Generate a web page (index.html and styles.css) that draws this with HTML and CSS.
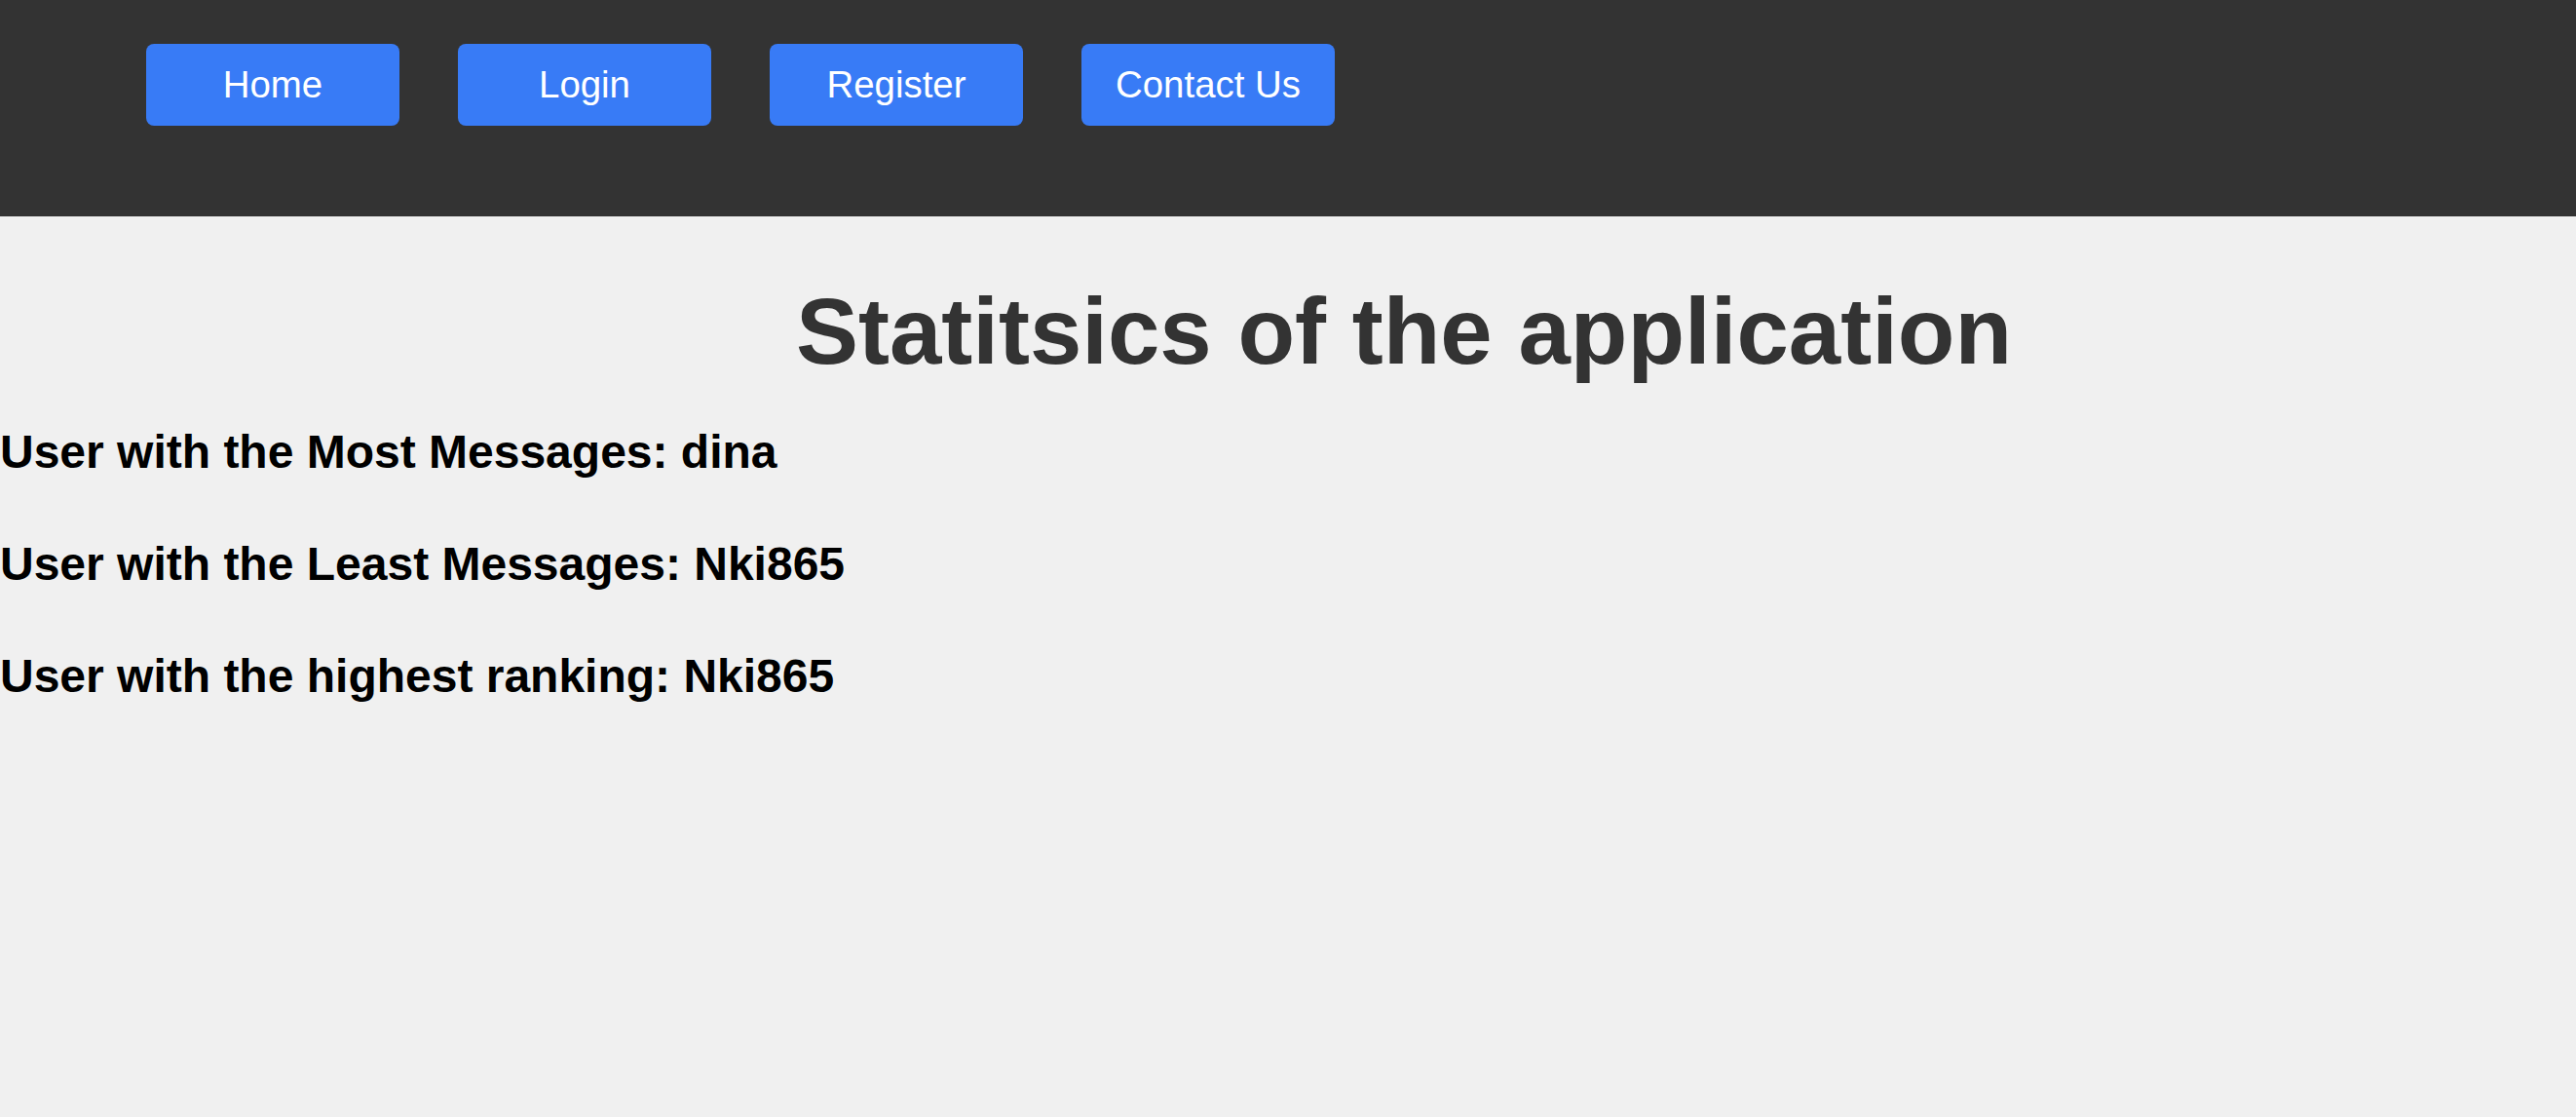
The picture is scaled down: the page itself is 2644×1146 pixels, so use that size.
FILE: index.html
```html
<!DOCTYPE html>
<html lang="en">
<head>
<meta charset="utf-8">
<title>Statistics</title>
<link rel="stylesheet" href="styles.css">
</head>
<body>
<header class="topbar">
  <nav class="nav">
    <a class="nav-btn" href="#">Home</a>
    <a class="nav-btn" href="#">Login</a>
    <a class="nav-btn" href="#">Register</a>
    <a class="nav-btn" href="#">Contact Us</a>
  </nav>
</header>
<main class="content">
  <h1 class="title">Statitsics of the application</h1>
  <div class="stats">
    <h2 class="stat">User with the Most Messages: dina</h2>
    <h2 class="stat">User with the Least Messages: Nki865</h2>
    <h2 class="stat">User with the highest ranking: Nki865</h2>
  </div>
</main>
</body>
</html>
```
FILE: styles.css
```css
html, body {
  margin: 0;
  padding: 0;
}
body {
  background: #f0f0f0;
  font-family: "Liberation Sans", Arial, sans-serif;
  min-height: 1146px;
}
.topbar {
  background: #333333;
  height: 222px;
  box-sizing: border-box;
  padding: 45px 0 0 150px;
}
.nav {
  display: flex;
  gap: 60px;
}
.nav-btn {
  display: flex;
  align-items: center;
  justify-content: center;
  width: 260px;
  height: 84px;
  background: #387bf6;
  color: #ffffff;
  border-radius: 8px;
  font-size: 38.4px;
  text-decoration: none;
}
.content {
  padding-top: 63px;
}
.title {
  margin: 0 0 41px 0;
  padding-left: 238px;
  text-align: center;
  color: #333333;
  font-size: 96px;
  font-weight: bold;
  line-height: 110px;
}
.stats {
  display: flex;
  flex-direction: column;
  gap: 60px;
}
.stat {
  margin: 0;
  font-size: 48px;
  font-weight: bold;
  line-height: 55px;
  color: #000000;
}
```
